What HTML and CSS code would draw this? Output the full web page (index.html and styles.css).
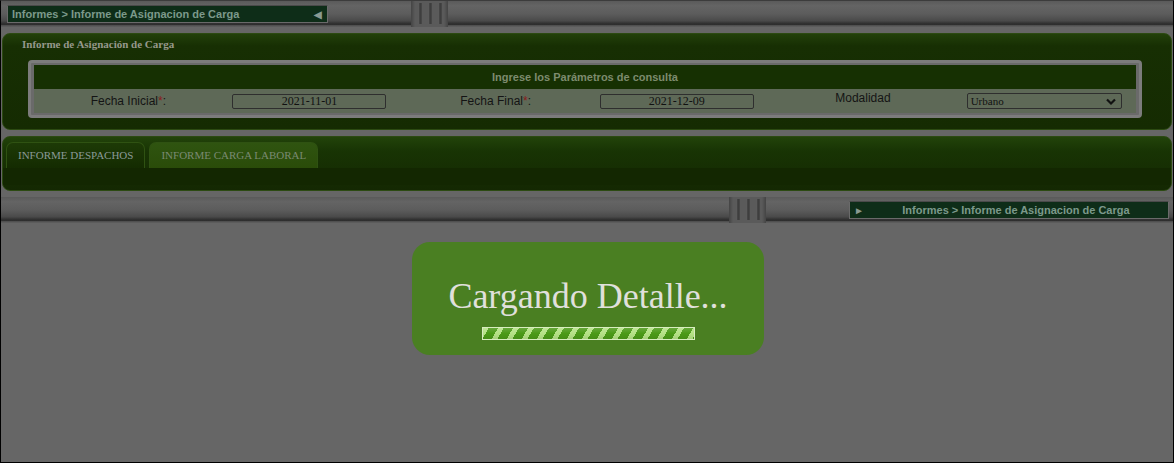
FILE: index.html
```html
<!DOCTYPE html>
<html lang="es">
<head>
<meta charset="utf-8">
<title>Informe de Asignación de Carga</title>
<link rel="stylesheet" href="styles.css">
</head>
<body>
<div class="frame">
  <div class="bar">
    <div class="crumb crumb-left">
      <span class="crumb-text">Informes &gt; Informe de Asignacion de Carga</span>
      <span class="crumb-arrow">&#9664;</span>
    </div>
    <div class="rail rail-a"></div>
    <div class="grip"><i></i><i></i><i></i></div>
    <div class="rail rail-grow"></div>
  </div>

  <div class="panel panel-params">
    <div class="panel-title">Informe de Asignación de Carga</div>
    <div class="param-box">
      <table class="param-table">
        <tr class="param-head"><td colspan="6">Ingrese los Parámetros de consulta</td></tr>
        <tr class="param-row">
          <td class="lbl">Fecha Inicial<span class="req">*</span>:</td>
          <td><span class="field">2021-11-01</span></td>
          <td class="lbl">Fecha Final<span class="req">*</span>:</td>
          <td><span class="field">2021-12-09</span></td>
          <td class="lbl lbl-up">Modalidad</td>
          <td>
            <span class="select">Urbano
              <svg class="chev" width="10" height="8" viewBox="0 0 10 8"><path d="M1 1.5 L5 5.5 L9 1.5" fill="none" stroke="#111" stroke-width="2.2"/></svg>
            </span>
          </td>
        </tr>
      </table>
    </div>
  </div>

  <div class="panel panel-tabs">
    <div class="tab-strip">
      <div class="tab tab-active">INFORME DESPACHOS</div>
      <div class="tab">INFORME CARGA LABORAL</div>
    </div>
    <div class="tab-body"></div>
  </div>

  <div class="bar">
    <div class="rail rail-grow"></div>
    <div class="grip"><i></i><i></i><i></i></div>
    <div class="rail rail-b"></div>
    <div class="crumb crumb-right">
      <span class="crumb-arrow">&#9658;</span>
      <span class="crumb-text">Informes &gt; Informe de Asignacion de Carga</span>
    </div>
  </div>

  <div class="loading">
    <div class="loading-text">Cargando Detalle...</div>
    <div class="progress"></div>
  </div>
</div>
</body>
</html>
```

FILE: styles.css
```css
* { box-sizing: border-box; }
html, body { margin: 0; padding: 0; }
body {
  background: #666666;
  font-family: "Liberation Sans", Arial, sans-serif;
}
.frame {
  position: relative;
  width: 1174px;
  height: 463px;
  border: 1px solid #000;
  border-top-color: #3c3c3c;
  background: #666666;
  overflow: hidden;
}

/* metallic bars */
.bar {
  display: flex;
  align-items: center;
  height: 26px;
  background: linear-gradient(to bottom, #5a5a5a 0, #646464 18%, #5c5c5c 50%, #4a4a4a 76%, #363636 84%, #2b2b2b 90%, #575757 95%, #5f5f5f 100%);
}
.rail {
  height: 100%;
  flex-shrink: 0;
}
.rail-a { width: 83px; }
.rail-b { width: 83px; }
.rail-grow { flex: 1 1 auto; }
.grip {
  flex-shrink: 0;
  display: flex;
  gap: 6px;
  height: 100%;
  padding: 2px 6px 3px 7px;
  background: linear-gradient(to right, #444 0, #5a5a5a 4px, #5a5a5a calc(100% - 4px), #444 100%);
}
.grip i {
  display: block;
  width: 4px;
  height: 100%;
  background: linear-gradient(to right, #666, #3a3a3a 50%, #4a4a4a);
}
.crumb {
  flex-shrink: 0;
  display: flex;
  align-items: center;
  height: 18px;
  background: #0e2d18;
  border: 1px solid #6a6a6a;
  border-top-color: #4a4a4a;
  color: #7c998b;
  font-weight: bold;
  font-size: 11px;
  white-space: nowrap;
}
.crumb-left {
  width: 321px;
  margin-left: 6px;
  padding: 0 5px 0 4px;
  justify-content: space-between;
}
.crumb-right {
  width: 320px;
  margin-right: 4px;
  padding: 0 4px;
}
.crumb-right .crumb-text {
  flex: 1;
  text-align: center;
  padding-left: 4px;
}
.crumb-arrow {
  font-size: 10px;
  color: #8a9a92;
}

/* panels */
.panel {
  margin: 6px 1px 6px 1px;
  border: 1px solid #2c4a12;
  border-radius: 8px;
  background: linear-gradient(to bottom, #22400a 0, #172f03 12px, #152b02 100%);
}
.panel-params {
  height: 97px;
  padding: 4px 29px 0 25px;
}
.panel-title {
  font-family: "Liberation Serif", "Times New Roman", serif;
  font-weight: bold;
  font-size: 11px;
  color: #96988c;
  margin-left: -6px;
  height: 22px;
}
.param-box {
  border: 3px solid #7c7c7c;
  border-radius: 4px;
  padding: 2px 3px 2px 3px;
  background: #6a6a6a;
}
.param-table {
  width: 100%;
  border-collapse: collapse;
  table-layout: fixed;
}
.param-head td {
  height: 24px;
  background: #163002;
  text-align: center;
  color: #7d8b6e;
  font-weight: bold;
  font-size: 11px;
}
.param-row td {
  height: 24px;
  background: #5e6957;
  text-align: center;
  font-size: 12px;
  color: #141414;
  vertical-align: middle;
  padding-top: 1px;
}
.param-row .lbl { padding-left: 6px; }
.param-row .lbl-up { vertical-align: top; padding-top: 2px; }
.req { color: #8a1c1c; }
.field, .select {
  display: inline-block;
  width: 154px;
  height: 15px;
  line-height: 13px;
  border: 1px solid #2e2e2e;
  border-radius: 2px;
  background: #5e6957;
  font-family: "Liberation Serif", "Times New Roman", serif;
  font-size: 12px;
  color: #111;
  text-align: center;
}
.select {
  position: relative;
  width: 155px;
  height: 16px;
  text-align: left;
  padding-left: 3px;
  font-size: 11px;
  line-height: 14px;
}
.chev {
  position: absolute;
  right: 5px;
  top: 4px;
}

.panel-tabs {
  height: 55px;
  padding: 5px 0 0 3px;
  background: linear-gradient(to bottom, #22430a 0, #183404 14px, #142802 100%);
}
.tab-strip {
  display: flex;
  gap: 4px;
  height: 26px;
}
.tab {
  flex-shrink: 0;
  white-space: nowrap;
  padding: 0 11px;
  border-radius: 7px 7px 0 0;
  border: 1px solid #2f5212;
  border-bottom: none;
  background: linear-gradient(to bottom, #2f5410 0, #2a4c09 100%);
  font-family: "Liberation Serif", "Times New Roman", serif;
  font-size: 11px;
  color: #7a8a72;
  line-height: 25px;
}
.tab-active {
  background: linear-gradient(to bottom, #1d3a06 0, #142b01 100%);
  color: #8a9a98;
}
.tab-body {
  height: 17px;
  margin-left: -3px;
  background: #132701;
}

/* loading overlay */
.loading {
  position: absolute;
  left: 411px;
  top: 241px;
  width: 352px;
  height: 113px;
  border-radius: 18px;
  background: #4a7f22;
  display: flex;
  flex-direction: column;
  align-items: center;
  padding-top: 34px;
}
.loading-text {
  font-family: "Liberation Serif", "Times New Roman", serif;
  font-size: 36px;
  line-height: 41px;
  color: #e0e0dc;
}
.progress {
  margin-top: 10px;
  width: 213px;
  height: 13px;
  border: 1px solid #d8ecc0;
  background:
    linear-gradient(to bottom, rgba(255,255,255,0.15) 0, rgba(255,255,255,0) 50%, rgba(0,0,0,0.08) 100%),
    repeating-linear-gradient(120deg, #b5e285 0, #b5e285 5px, #4b9a17 5px, #4b9a17 13px);
}
```
